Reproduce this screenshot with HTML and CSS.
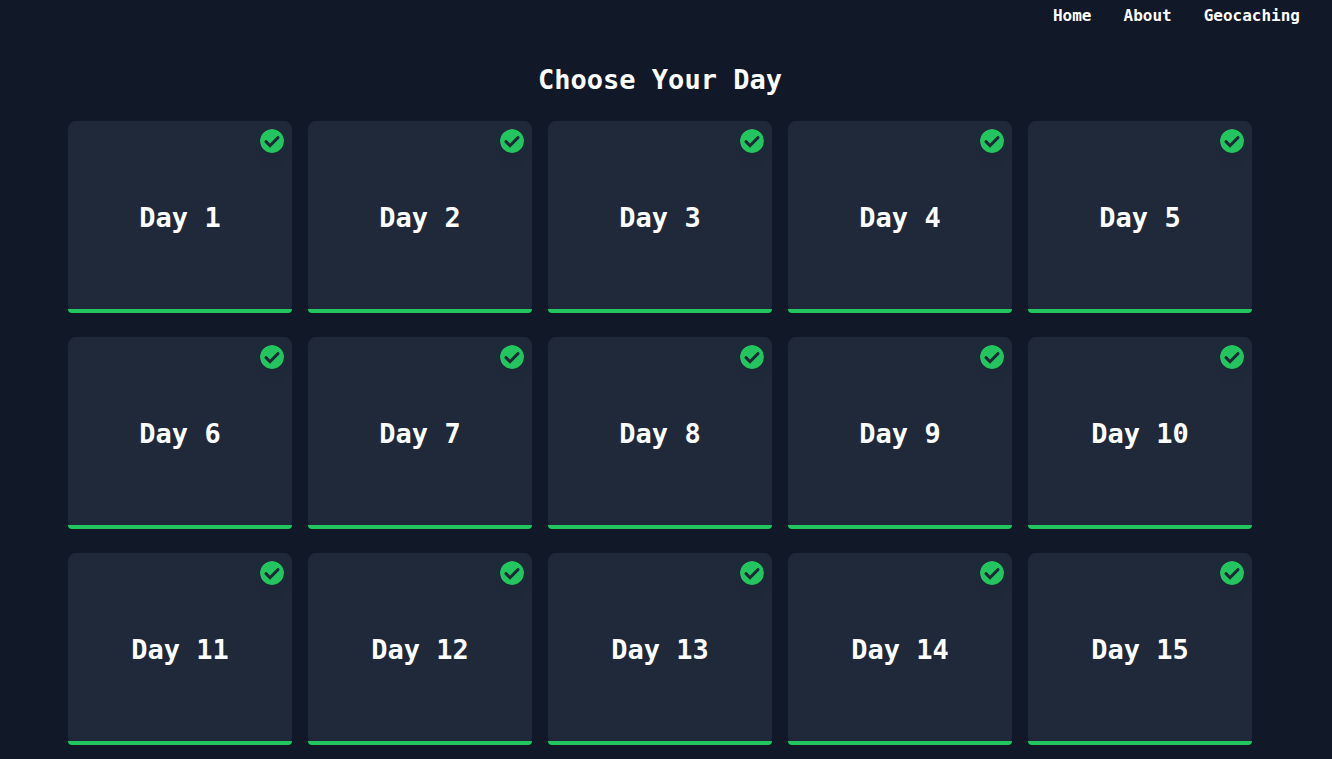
FILE: index.html
```html
<!DOCTYPE html>
<html lang="en">
<head>
<meta charset="utf-8">
<meta name="viewport" content="width=device-width, initial-scale=1">
<title>Choose Your Day</title>
<link rel="stylesheet" href="styles.css">
</head>
<body>
<svg class="sprite" aria-hidden="true">
  <symbol id="check" viewBox="0 0 24 24">
    <path class="check-disc" d="M12 0a12 12 0 1 0 0 24a12 12 0 0 0 0-24z"/>
    <path class="check-mark" d="M6 12.6l4 4.1l8-8.1"/>
  </symbol>
</svg>
<nav class="nav">
  <a href="#home">Home</a>
  <a href="#about">About</a>
  <a href="#geocaching">Geocaching</a>
</nav>
<main class="main">
  <h1 class="title">Choose Your Day</h1>
  <div class="days" id="days"></div>
</main>
<script src="days.js"></script>
</body>
</html>
```
FILE: styles.css
```css
* {
  box-sizing: border-box;
}

body {
  margin: 0;
  min-height: 100vh;
  background: #111827;
  color: #fff;
  font-family: "DejaVu Sans Mono", monospace;
  font-weight: 700;
}

a {
  color: inherit;
  text-decoration: none;
}

.sprite {
  display: none;
}

.nav {
  display: flex;
  justify-content: flex-end;
  gap: 32px;
  padding: 4px 32px;
  font-size: 16px;
  line-height: 24px;
}

.main {
  padding: 28px 12px 0 0;
}

.title {
  margin: 0;
  font-size: 27px;
  line-height: 40px;
  text-align: center;
}

.days {
  display: flex;
  flex-wrap: wrap;
  justify-content: center;
  gap: 24px 16px;
  padding: 21px 48px 14px;
}

.day {
  position: relative;
  display: flex;
  align-items: center;
  justify-content: center;
  width: 224px;
  height: 192px;
  padding-top: 2px;
  border-radius: 8px;
  background: #1f293a;
  font-size: 27px;
  line-height: 40px;
}

.day::after {
  content: "";
  position: absolute;
  right: 0;
  bottom: 0;
  left: 0;
  height: 4px;
  border-radius: 0 0 4px 4px;
  background: #22c55e;
}

.check {
  position: absolute;
  top: 8px;
  right: 8px;
  width: 24px;
  height: 24px;
  border-radius: 50%;
  box-shadow: 0 10px 15px -3px rgb(0 0 0 / 5%), 0 4px 6px -4px rgb(0 0 0 / 10%);
}

.check-disc {
  fill: #22c55e;
}

.check-mark {
  fill: none;
  stroke: #1f293a;
  stroke-width: 3;
  stroke-linecap: round;
  stroke-linejoin: miter;
}
```
FILE: days.js
```js
const days = document.getElementById("days");

for (let n = 1; n <= 15; n++) {
  days.insertAdjacentHTML("beforeend", `
    <a class="day" href="#day-${n}">
      Day ${n}
      <svg class="check" role="img" aria-label="Completed"><use href="#check"/></svg>
    </a>`);
}
```
